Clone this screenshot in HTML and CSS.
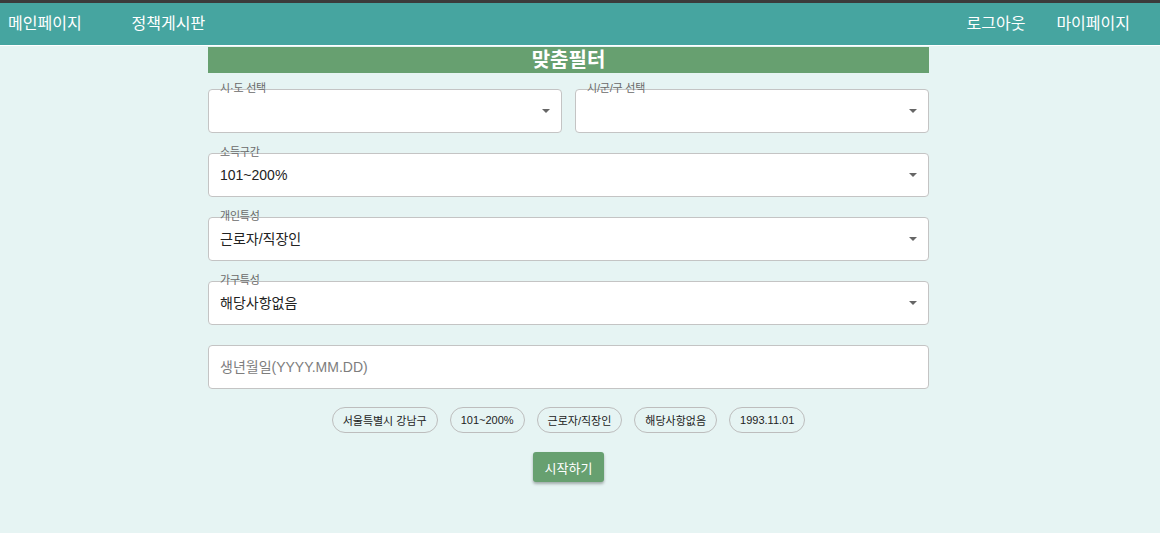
FILE: index.html
```html
<!DOCTYPE html>
<html lang="ko">
<head>
<meta charset="utf-8">
<title>맞춤필터</title>
<link rel="stylesheet" href="styles.css">
</head>
<body>
<header class="nav">
  <div class="nav-group left">
    <a class="nav-link">메인페이지</a>
    <a class="nav-link">정책게시판</a>
  </div>
  <div class="nav-group right">
    <a class="nav-link">로그아웃</a>
    <a class="nav-link">마이페이지</a>
  </div>
</header>
<main class="panel">
  <h1 class="title">맞춤필터</h1>
  <div class="row two">
    <div class="field select">
      <span class="label">시·도 선택</span>
      <span class="value"></span>
      <span class="arrow"></span>
    </div>
    <div class="field select">
      <span class="label">시/군/구 선택</span>
      <span class="value"></span>
      <span class="arrow"></span>
    </div>
  </div>
  <div class="row">
    <div class="field select">
      <span class="label">소득구간</span>
      <span class="value">101~200%</span>
      <span class="arrow"></span>
    </div>
  </div>
  <div class="row">
    <div class="field select">
      <span class="label">개인특성</span>
      <span class="value">근로자/직장인</span>
      <span class="arrow"></span>
    </div>
  </div>
  <div class="row">
    <div class="field select">
      <span class="label">가구특성</span>
      <span class="value">해당사항없음</span>
      <span class="arrow"></span>
    </div>
  </div>
  <div class="row">
    <div class="field">
      <span class="placeholder">생년월일(YYYY.MM.DD)</span>
    </div>
  </div>
  <div class="chips">
    <span class="chip">서울특별시 강남구</span>
    <span class="chip">101~200%</span>
    <span class="chip">근로자/직장인</span>
    <span class="chip">해당사항없음</span>
    <span class="chip">1993.11.01</span>
  </div>
  <div class="actions">
    <button class="start">시작하기</button>
  </div>
</main>
</body>
</html>
```
FILE: styles.css
```css
* { box-sizing: border-box; }
html, body { margin: 0; padding: 0; }
body {
  background: #e6f4f3;
  font-family: "Liberation Sans", "Noto Sans CJK KR", sans-serif;
  color: #222;
  border-top: 3px solid #3b3b3b;
  min-height: 533px;
}
.nav {
  height: 43px;
  background: #46a5a0;
  border-bottom: 1px solid #ffffff;
  display: flex;
  align-items: center;
  justify-content: space-between;
  padding: 0 30px 0 8px;
}
.nav-group { display: flex; align-items: center; }
.nav-group.left { gap: 50px; }
.nav-group.right { gap: 31px; }
.nav-link {
  color: #ffffff;
  font-size: 16px;
  line-height: 20px;
  letter-spacing: 0;
}
.panel {
  width: 721px;
  margin: 1px 0 0 208px;
}
.title {
  margin: 0;
  height: 26px;
  background: #67a070;
  color: #ffffff;
  font-size: 20px;
  line-height: 26px;
  font-weight: 700;
  text-align: center;
}
.row {
  display: flex;
  gap: 13px;
  margin-top: 20px;
}
.row.two { margin-top: 16px; }
.field {
  position: relative;
  flex: 1;
  height: 44px;
  background: #ffffff;
  border: 1px solid #c4c4c4;
  border-radius: 4px;
  display: flex;
  align-items: center;
  padding: 0 30px 0 11px;
}
.label {
  position: absolute;
  left: 11px;
  top: -8px;
  font-size: 11px;
  line-height: 13px;
  color: #6a6a6a;
  letter-spacing: -0.2px;
}
.value {
  font-size: 14px;
  line-height: 18px;
  color: #222;
}
.placeholder {
  font-size: 14px;
  line-height: 18px;
  color: #7d7d7d;
}
.arrow {
  position: absolute;
  right: 11px;
  top: 19px;
  width: 0;
  height: 0;
  border-left: 4px solid transparent;
  border-right: 4px solid transparent;
  border-top: 4px solid #666;
}
.chips {
  display: flex;
  justify-content: center;
  gap: 12px;
  margin-top: 18px;
}
.chip {
  height: 26px;
  border: 1px solid #bdbdbd;
  border-radius: 13px;
  padding: 0 10px;
  display: flex;
  align-items: center;
  font-size: 11px;
  color: #222;
  letter-spacing: 0;
}
.actions {
  display: flex;
  justify-content: center;
  margin-top: 19px;
}
.start {
  width: 71px;
  height: 30px;
  border: none;
  border-radius: 3px;
  background: #67a070;
  color: #ffffff;
  font-family: inherit;
  font-size: 13px;
  box-shadow: 0 2px 3px rgba(0,0,0,0.3);
  padding: 0;
}
```
